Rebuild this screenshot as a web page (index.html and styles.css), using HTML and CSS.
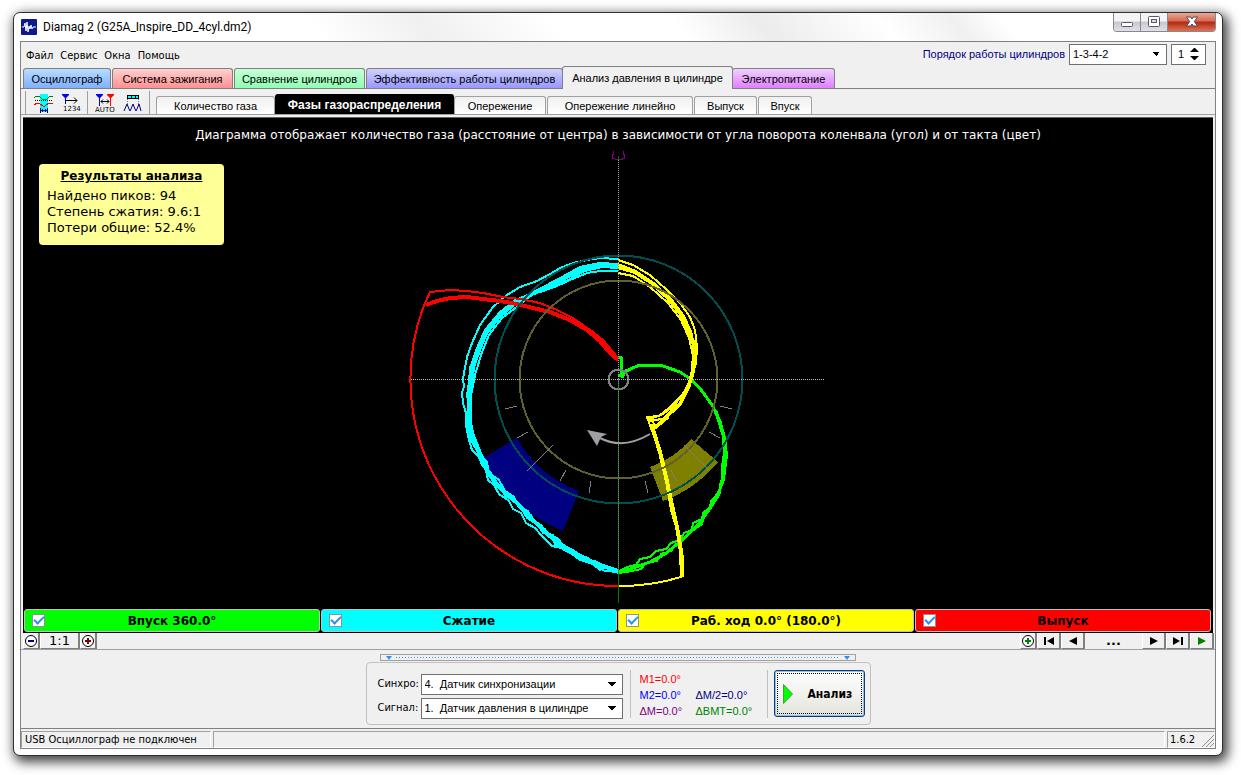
FILE: index.html
```
<!DOCTYPE html>
<html lang="ru">
<head>
<meta charset="utf-8">
<title>Diamag 2</title>
<link rel="stylesheet" href="styles.css">
</head>
<body>
<div class="window">
  <header class="titlebar">
    <svg class="app-icon" width="16" height="16" viewBox="0 0 16 16"><rect width="16" height="16" rx="1" fill="#0c1a8c"/><path d="M1 8h2l1-4 1 8 1-9 1 10 1-6 1 3 1-4 1 4 1-2h3" fill="none" stroke="#fff"/></svg>
    <h1 class="title">Diamag 2 (G25A_Inspire_DD_4cyl.dm2)</h1>
    <div class="caption-buttons">
      <button class="cap" aria-label="Свернуть"><svg width="14" height="12" viewBox="0 0 14 12"><rect x="1.500" y="6.500" width="11" height="4" rx="1" fill="#fff" stroke="#56586c"/></svg></button>
      <button class="cap" aria-label="Развернуть"><svg width="14" height="12" viewBox="0 0 14 12"><rect x="1.500" y=".5" width="11" height="10" rx="1" fill="#fff" stroke="#56586c"/><rect x="4.500" y="3.500" width="5" height="3" fill="#ddd" stroke="#56586c"/></svg></button>
      <button class="cap cap-close" aria-label="Закрыть"><svg width="14" height="12" viewBox="0 0 14 12"><path d="M1.500 1h4L7 3 8.500 1h4L9.300 5.500 12.500 10h-4L7 8l-1.500 2h-4l3.200-4.500z" fill="#fff" stroke="#56484c"/></svg></button>
    </div>
  </header>
  <main class="client">
    <div class="top-row">
      <nav class="menu"><button>Файл</button><button>Сервис</button><button>Окна</button><button>Помощь</button></nav>
      <div class="order">
        <label for="order">Порядок работы цилиндров</label>
        <select id="order" class="combo order-combo"><option>1-3-4-2</option></select>
        <div class="spin"><input type="text" value="1" aria-label="Цилиндр"><svg width="9" height="14" viewBox="0 0 9 14"><path d="M0 5l4-4h1l4 4zM0 9l4 4h1l4-4z"/></svg></div>
      </div>
    </div>
    <nav class="tabs">
      <button class="tab t-blue">Осциллограф</button>
      <button class="tab t-red">Система зажигания</button>
      <button class="tab t-green">Сравнение цилиндров</button>
      <button class="tab t-violet">Эффективность работы цилиндров</button>
      <button class="tab t-current">Анализ давления в цилиндре</button>
      <button class="tab t-pink">Электропитание</button>
    </nav>
    <div class="toolbar">
      <div class="tool-group">
        <button class="tool" aria-label="Сигнал"><svg width="20" height="20" viewBox="0 0 20 20" shape-rendering="crispEdges"><rect x="7" y="1" width="8" height="18" fill="#00ffff"/><path d="M1 5l2-2h3l3 3h5l3-3h3" fill="none" stroke="#008000"/><path d="M1 12l3-2h2l4 3h2l4-3h3l1 1" fill="none" stroke="#f00"/><path d="M2 7.500h17" stroke="#000" stroke-dasharray="1 1"/><path d="M7 17.500h8M7.500 15v5M14.500 15v5M9.500 16v3M12.500 16v3" stroke="#000080" fill="none"/></svg></button>
        <button class="tool" aria-label="Порядок 1234"><svg width="20" height="20" viewBox="0 0 20 20"><path d="M1 1h7v1L5 5v6H4V5L1 2z" fill="#00f"/><path d="M5 7.500h11M13 4.500l3 3-3 3" fill="none" stroke="#000"/><text x="2" y="18" class="glyph">1234</text></svg></button>
      </div>
      <div class="tool-group">
        <button class="tool" aria-label="Авто"><svg width="20" height="20" viewBox="0 0 20 20"><path d="M1 1h7v1L5 5v8H4V5L1 2z" fill="#00f"/><path d="M12 1h7v1l-3 3v8h-1V5l-3-3z" fill="#f00"/><path d="M6 8.500h8M8 6.500l-2 2 2 2M12 6.500l2 2-2 2" fill="none" stroke="#000"/><text x="0" y="19" class="glyph">AUTO</text></svg></button>
        <button class="tool" aria-label="Пики"><svg width="20" height="20" viewBox="0 0 20 20"><rect x="4.500" y="2.500" width="11" height="3" fill="#00ffff" stroke="#000"/><path d="M8.500 3v2M12.500 3v2" stroke="#000"/><path d="M4.500 6v8M15.500 6v8" stroke="#777" stroke-dasharray="1 1"/><path d="M1 18l3-7 2 5 1 2 1-2 2-5 2 5 1 2 1-2 2-5 2 7" fill="none" stroke="#000080"/></svg></button>
      </div>
      <nav class="subtabs">
        <button class="sub s1">Количество газа</button>
        <button class="sub s2 on">Фазы газораспределения</button>
        <button class="sub s3">Опережение</button>
        <button class="sub s4">Опережение линейно</button>
        <button class="sub s5">Выпуск</button>
        <button class="sub s6">Впуск</button>
      </nav>
    </div>
    <section class="scope">
      <p class="scope-caption">Диаграмма отображает количество газа (расстояние от центра) в зависимости от угла поворота коленвала (угол) и от такта (цвет)</p>
      <aside class="results">
        <h2>Результаты анализа</h2>
        <p>Найдено пиков: 94</p>
        <p>Степень сжатия: 9.6:1</p>
        <p>Потери общие: 52.4%</p>
      </aside>
      <svg class="plot" viewBox="23 118 1190 491" shape-rendering="crispEdges" fill="none" stroke-width="2" stroke-linejoin="round">
        <path d="M482 459L517 438A118 118 0 0 0 579 491L563 531A160 160 0 0 1 482 459z" fill="#000080"/>
        <path d="M691 439L718 462A130 130 0 0 1 663 501L650 467A94 94 0 0 0 691 439z" fill="#808000"/>
        <g stroke="#00ffff">
          <path d="M618 259L600 258 587 260 573 263 560 268 550 274 537 281 520 287 507 295 493 307 480 325 472 343 467 357 464 373 463 380 464 386 462 393 463 403 466 413 466 425 469 440 472 450 479 457 482 465 486 470 488 480 494 485 499 494 509 501 513 509 521 513 526 523 535 528 541 535 552 546 561 548 572 554 580 560 590 563 605 571 618 572"/>
          <path d="M618 264L600 263 580 267 562 277 545 286 530 294 515 300 500 312 485 330 477 348 470 368 469 382 467 395 469 407 467 420 471 441 477 447 481 456 485 469 491 473 495 482 503 487 508 497 517 504 522 510 531 515 535 523 545 529 549 537 558 539 564 546 573 550 584 559 595 561 604 567 618 570"/>
          <path d="M618 267L601 266 582 269 563 279 545 288 527 296 511 305 498 318 486 333 479 350 472 370 469 396 469 420 473 436 482 458 488 473 500 488 516 502 530 517 545 532 560 544 577 554 590 561 606 567 618 571" stroke-width="4"/>
          <path d="M618 268L602 267 585 271 568 280 550 287 532 295 518 306 502 318 489 335 482 352 475 375 471 395 471 418 472 432 475 446 483 463 487 468 493 481 501 486 505 496 514 500 523 511 527 518 538 525 543 533 553 535 555 545 569 550 574 553 582 560 591 562 600 570 608 567 618 573"/>
          <path d="M618 271L600 271 587 273 570 280 557 286 543 291 530 295 517 303 500 317 487 333 480 347 475 363 472 380 470 397 471 420 473 444 480 455 487 462 489 473 499 480 505 491 514 497 519 507 528 511 532 520 541 525 547 534 557 538 562 546 573 551 577 554 588 558 596 567 606 567 618 572"/>
        </g>
        <g stroke="#00ff00">
          <path d="M619 359L621 357 621 376 628 370 640 365 650 365 663 366 680 372 692 380 702 391 712 405 720 421 725 440 725 456 723 475 719 494 709 510 696 527 680 542 665 554 650 562 630 569 619 572" stroke-width="3"/>
          <path d="M713 407L718 420 723 437 724 453 722 466 722 478 720 485 719 493 711 501 710 507 703 513 702 519 693 523 692 530 684 533 680 540 671 543 666 549 656 551 650 557 640 559 636 565 630 566 619 571"/>
          <path d="M716 410L721 425 725 440 727 455 725 471 724 480 720 489 715 497 711 507 705 513 702 524 695 529 690 533 683 540 676 544 671 551 661 554 657 561 646 563 641 569 632 571 619 573"/>
          <path d="M619 376L622 372 626 370 623 377z" fill="#00ff00"/>
        </g>
        <g stroke="#ff0000">
          <path d="M426 305L437 301 450 298 467 297 483 299 500 301 517 304 533 308 550 312 570 320 587 330 600 341 609 352 618 360" stroke-width="4"/>
          <path d="M618 358L603 340 593 332 573 318 557 310 540 303 520 299 503 297 483 293 467 291 450 290 430 292 423 308A207 207 0 0 0 618 586"/>
        </g>
        <g stroke="#ffff00">
          <path d="M618 260L633 265 650 275 667 290 680 303 690 317 695 330 697 347 696 363 691 380 684 398 675 409 662 420 652 432"/>
          <path d="M618 267L635 272 652 283 668 298 680 313 688 328 694 345 695 360 692 375 688 388 680 404 670 413 655 428" stroke-width="4"/>
          <path d="M618 273L633 276 650 287 668 303 681 320 689 338 693 356 691 378 683 394 670 407 659 416 647 417 652 431"/>
          <path d="M618 264L636 271 655 284 672 300 684 316 692 334 694 350 693 370 687 388 674 406 663 414 650 419 657 427 668 418 649 421"/>
          <path d="M652 424L654 433 660 452 666 477 672 505 678 532 682 558 682 577" stroke-width="4"/>
          <path d="M653 433L663 463 671 510 677 530 680 553 681 577A208 208 0 0 1 618 586"/>
        </g>
        <circle cx="618.500" cy="379.500" r="124" stroke="#005050"/>
        <circle cx="618.500" cy="379.500" r="99" stroke="#606030"/>
        <circle cx="618.500" cy="379.500" r="10" stroke="#808080"/>
        <g stroke="#808080" stroke-width="1">
          <path d="M505 409l12-3M517 438l11-6M527 471l26-26M560 481l6-11M589 493l2-12M720 406l12 3M709 432l11 6M684 445l25 25M671 470l6 11M645 481l3 12"/>
        </g>
        <path d="M411 379.500H825" stroke="#c0c0c0" stroke-width="1" stroke-dasharray="1 1"/>
        <path d="M618.500 160V379" stroke="#a0a0a8" stroke-width="1" stroke-dasharray="1 1"/>
        <path d="M618.500 379V603" stroke="#008000" stroke-width="1"/>
        <path d="M618.500 379V573" stroke="#908090" stroke-width="1" stroke-dasharray="1 1"/>
        <path d="M613.500 151v3l-1 1v3l2 1h8l2-1v-3l-1-1v-3" stroke="#800080" stroke-width="1"/>
        <path d="M618.500 156v4" stroke="#008000" stroke-width="1"/>
        <path d="M600 438Q623 450 650 434" stroke="#a0a0a4" shape-rendering="auto"/>
        <path d="M587 430L607 434 601 437 597 446z" fill="#a0a0a4" shape-rendering="auto"/>
      </svg>
      <div class="strokes">
        <label class="stroke intake"><input type="checkbox" checked><span>Впуск 360.0°</span></label>
        <label class="stroke compress"><input type="checkbox" checked><span>Сжатие</span></label>
        <label class="stroke power"><input type="checkbox" checked><span>Раб. ход 0.0° (180.0°)</span></label>
        <label class="stroke exhaust"><input type="checkbox" checked><span>Выпуск</span></label>
      </div>
    </section>
    <div class="navrow">
      <button class="nb w-s" aria-label="Уменьшить"><svg width="14" height="14" viewBox="0 0 14 14"><circle cx="7" cy="7" r="5.500" fill="#fff" stroke="#000"/><path d="M4 7h6" stroke="#000080" stroke-width="2"/></svg></button>
      <button class="nb w-l">1:1</button>
      <button class="nb w-s" aria-label="Увеличить"><svg width="14" height="14" viewBox="0 0 14 14"><circle cx="7" cy="7" r="5.500" fill="#fff" stroke="#000"/><path d="M4 7h6M7 4v6" stroke="#800000" stroke-width="2"/></svg></button>
      <span class="grow"></span>
      <button class="nb w-s" aria-label="Добавить"><svg width="14" height="14" viewBox="0 0 14 14"><circle cx="7" cy="7" r="5.500" fill="#fff" stroke="#000"/><path d="M4 7h6M7 4v6" stroke="#008000" stroke-width="2"/></svg></button>
      <button class="nb w-m" aria-label="В начало"><svg width="12" height="8" viewBox="0 0 12 8"><path d="M1 0h2v8H1zM11 0v8L4 4z"/></svg></button>
      <button class="nb w-m" aria-label="Назад"><svg width="12" height="8" viewBox="0 0 12 8"><path d="M10 0v8L2 4z"/></svg></button>
      <span class="dots">...</span>
      <button class="nb w-m" aria-label="Вперёд"><svg width="12" height="8" viewBox="0 0 12 8"><path d="M2 0v8l8-4z"/></svg></button>
      <button class="nb w-m" aria-label="В конец"><svg width="12" height="8" viewBox="0 0 12 8"><path d="M1 0v8l7-4zM9 0h2v8H9z"/></svg></button>
      <button class="nb w-m" aria-label="Воспроизвести"><svg width="12" height="8" viewBox="0 0 12 8"><path d="M2 0v8l8-4z" fill="#008000"/></svg></button>
    </div>
    <section class="controls">
      <div class="splitter"><i></i><b></b><i></i></div>
      <div class="panel">
        <div class="fields">
          <label for="sync">Синхро:</label><select id="sync" class="combo"><option>4.&nbsp; Датчик синхронизации</option></select>
          <label for="signal">Сигнал:</label><select id="signal" class="combo"><option>1.&nbsp; Датчик давления в цилиндре</option></select>
        </div>
        <div class="marks">
          <span class="c-red">M1=0.0°</span><span></span>
          <span class="c-blue">M2=0.0°</span><span class="c-navy">ΔM/2=0.0°</span>
          <span class="c-purple">ΔM=0.0°</span><span class="c-green">ΔВМТ=0.0°</span>
        </div>
        <button class="analyze"><svg width="10" height="20" viewBox="0 0 10 20"><path d="M.5.500v19l9-9.500z" fill="#00ff00" stroke="#40a040"/></svg><span>Анализ</span></button>
      </div>
    </section>
    <footer class="status">
      <span class="cell first">USB Осциллограф не подключен</span>
      <span class="cell mid"></span>
      <span class="cell last">1.6.2<svg width="12" height="12" viewBox="0 0 12 12"><path d="M0 12L12 0M4 12l8-8M8 12l4-4" stroke="#909090"/></svg></span>
    </footer>
  </main>
</div>
</body>
</html>
```
FILE: styles.css
```
* { box-sizing: border-box; }
body {
  margin: 0;
  padding: 12px 18px 19px 13px;
  height: 100vh;
  background: #fff;
  font: 11px/14px "DejaVu Sans Condensed", "DejaVu Sans", sans-serif;
  color: #000;
  display: flex;
}
button, input, select { font: inherit; color: inherit; margin: 0; padding: 0; border: 0; background: none; }
h1, h2, p { margin: 0; font: inherit; }
svg { flex: none; }

.window {
  flex: 1;
  min-width: 0;
  display: flex;
  flex-direction: column;
  border: 1px solid #303030;
  border-radius: 7px;
  background: #fff;
  padding: 0 6px 6px;
  box-shadow: 3px 4px 12px 2px rgba(0, 0, 0, .75);
}
.titlebar {
  flex: none;
  height: 28px;
  display: flex;
  align-items: center;
  gap: 6px;
  padding-left: 1px;
  background: linear-gradient(50deg, transparent 25%, #f0f0f0 34%, #fff 45%, transparent 55%, #ececec 62%, transparent 72%, #f0f0f0 78%, transparent 82%);
}
.title { flex: 1; font: 12px/16px Roboto, sans-serif; }
.caption-buttons { align-self: flex-start; display: flex; border: 1px solid #888894; border-top: 0; border-radius: 0 0 4px 4px; overflow: hidden; }
.cap { width: 27px; height: 18px; border-right: 1px solid #888894; display: flex; align-items: center; justify-content: center; background: linear-gradient(#f4f4f4 45%, #c8c8cc 50%, #e0e0e6); }
.cap-close { width: 47px; border-right: 0; background: linear-gradient(#e8a898, #d86850 45%, #b02810 50%, #e07050); }

.client { flex: 1; min-height: 0; display: flex; flex-direction: column; border: 1px solid #808080; background: #f0f0f0; }
.top-row { flex: none; height: 24px; display: flex; justify-content: space-between; }
.menu { display: flex; gap: 7px; padding: 7px 0 0 5px; align-self: flex-start; }
.order { display: flex; align-items: center; gap: 4px; padding-right: 9px; color: #000080; font: 11px/14px "Liberation Sans", sans-serif; }
.combo {
  appearance: none;
  height: 21px;
  border: 1px solid #707070;
  padding: 0 18px 0 3px;
  font: 11px/18px "Liberation Sans", sans-serif;
  color: #000;
  background: conic-gradient(from -45deg at 50% 100%, #000 90deg, #fff 0) right 6px center / 8px 4px no-repeat #fff;
}
.order-combo { width: 98px; }
.spin { display: flex; align-items: center; width: 35px; height: 21px; border: 1px solid #707070; background: #fff; color: #000; padding-right: 6px; }
.spin input { flex: 1; min-width: 0; padding-left: 6px; }

.tabs { flex: none; height: 23px; display: flex; align-items: flex-end; padding-left: 2px; border-bottom: 1px solid #808080; font: 11px/14px "Liberation Sans", sans-serif; }
.tab { height: 20px; margin-right: 1px; border: 1px solid #808080; border-bottom: 0; border-radius: 3px 3px 0 0; white-space: nowrap; flex: none; }
.t-blue { width: 88px; background: linear-gradient(#b8dcff, #80b0ff); }
.t-red { width: 121px; background: linear-gradient(#ffd0d0, #ff9090); }
.t-green { width: 131px; background: linear-gradient(#c8ffd8, #90ffb0); }
.t-violet { width: 197px; margin-right: -1px; background: linear-gradient(#d0d0ff, #9898ff); }
.t-current { width: 171px; height: 23px; margin: 0 -1px -1px 0; background: #f0f0f0; }
.t-pink { width: 103px; background: linear-gradient(#f0d0ff, #e080ff); }

.toolbar { flex: none; height: 26px; display: flex; border-bottom: 1px solid #a0a0a0; padding-left: 4px; }
.tool-group { display: flex; gap: 6px; align-items: center; border-left: 1px solid #a0a0a0; margin-top: 2px; padding-left: 6px; width: 62px; }
.tool { width: 22px; height: 20px; }
.glyph { font: 7px "DejaVu Sans", sans-serif; }
.subtabs { display: flex; align-items: flex-end; margin-top: 2px; border-left: 1px solid #a0a0a0; padding-left: 6px; font: 11px/14px "Liberation Sans", sans-serif; }
.sub { flex: none; height: 18px; margin-right: 1px; border: 1px solid #a0a0a0; border-bottom: 0; border-radius: 3px 3px 0 0; background: linear-gradient(#f0f0f0, #fff); white-space: nowrap; }
.sub.on { height: 20px; margin: 0 0 0 -1px; border-color: #000; background: #000; color: #fff; font-weight: bold; font-size: 12px; }
.s1 { width: 119px; }
.s2 { width: 179px; }
.s3 { width: 92px; }
.s4 { width: 146px; }
.s5 { width: 63px; }
.s6 { width: 54px; }

.scope {
  flex: 1;
  min-height: 0;
  position: relative;
  display: flex;
  flex-direction: column;
  margin: 2px 2px 0;
  border-top: 1px solid #606060;
  background: #000;
  font: 13px/16px "DejaVu Sans", sans-serif;
}
.scope-caption { position: absolute; top: 9px; left: 0; right: 0; text-align: center; color: #fff; white-space: nowrap; font-size: 12px; }
.results { position: absolute; left: 16px; top: 46px; width: 185px; padding: 4px 8px 9px; border-radius: 4px; background: #ffff98; }
.results h2 { font-weight: bold; font-size: 12px; text-align: center; text-decoration: underline; margin-bottom: 4px; }
.plot { flex: 1; width: 100%; min-height: 0; }
.strokes { flex: none; display: flex; gap: 1px; padding: 0 2px 1px 1px; }
.stroke { flex: 1; height: 23px; display: flex; align-items: center; padding: 0 7px; border: 1px solid #c0c0c0; border-radius: 3px; font-weight: bold; font-size: 12px; }
.stroke span { flex: 1; text-align: center; padding-right: 13px; }
.stroke input { appearance: none; flex: none; width: 13px; height: 13px; border: 1px solid #909090; background: #fff; display: flex; align-items: center; justify-content: center; }
.stroke input::before { content: ""; width: 8px; height: 4px; border: solid #3090f0; border-width: 0 0 2px 2px; transform: rotate(-45deg); margin-bottom: 3px; }
.intake { background: #00ff00; }
.compress { background: #00ffff; }
.power { background: #ffff00; }
.exhaust { background: #ff0000; }

.navrow { flex: none; height: 17px; display: flex; padding: 0 1px 0 2px; border-bottom: 1px solid #a0a0a0; font: 13px/16px "DejaVu Sans", sans-serif; }
.nb { display: flex; align-items: center; justify-content: center; border-right: 2px solid #808080; border-bottom: 1px solid #808080; border-left: 1px solid #fff; flex: none; }
.w-s { width: 17px; }
.w-l { width: 40px; }
.w-m { width: 24px; }
.grow { flex: 1; }
.dots { width: 57px; text-align: center; font-weight: bold; }

.controls { flex: none; display: flex; flex-direction: column; align-items: center; padding: 4px 0 3px; border-bottom: 1px solid #808080; }
.splitter { display: flex; align-items: center; gap: 4px; width: 476px; height: 7px; border: 1px solid #a0a0a0; padding: 0 5px; }
.splitter i { border: solid transparent; border-width: 4px 3px 0; border-top-color: #3090f0; }
.splitter b { flex: 1; height: 1px; background: repeating-linear-gradient(90deg, #3090f0 0 1px, transparent 1px 3px); }
.panel { display: flex; align-items: center; width: 505px; height: 63px; margin-top: 1px; padding: 0 5px 0 11px; border: 1px solid #c0c0c0; border-radius: 4px; }
.fields { display: grid; grid-template-columns: 43px 202px; row-gap: 3px; align-items: center; padding-top: 5px; }
.marks { display: grid; grid-template-columns: 56px 67px; grid-auto-rows: 16px; margin-left: 7px; padding-left: 9px; border-left: 1px solid #c0c0c0; border-right: 1px solid #c0c0c0; font: 11px/18px "Liberation Sans", sans-serif; width: 138px; white-space: nowrap; }
.c-red { color: #f00; }
.c-blue { color: #00f; }
.c-navy { color: #000080; }
.c-purple { color: #800080; }
.c-green { color: #008000; }
.analyze { display: flex; align-items: center; gap: 15px; width: 91px; height: 47px; margin-left: 6px; padding-left: 8px; border: 1px solid #103c70; border-radius: 3px; background: linear-gradient(#fff, #e4e4dc); box-shadow: inset 0 0 0 1px #90c0f0; outline: 1px dotted #000; outline-offset: -4px; font: bold 12px/14px "DejaVu Sans Condensed", sans-serif; }

.status { flex: none; height: 19px; display: flex; gap: 2px; padding: 2px 0 0; }
.cell { border: 1px solid #a0a0a0; border-right-color: #fff; border-bottom-color: #fff; padding-left: 3px; line-height: 15px; }
.first { width: 190px; }
.mid { flex: 1; }
.last { width: 48px; padding-left: 2px; display: flex; justify-content: space-between; align-items: flex-end; }
```
